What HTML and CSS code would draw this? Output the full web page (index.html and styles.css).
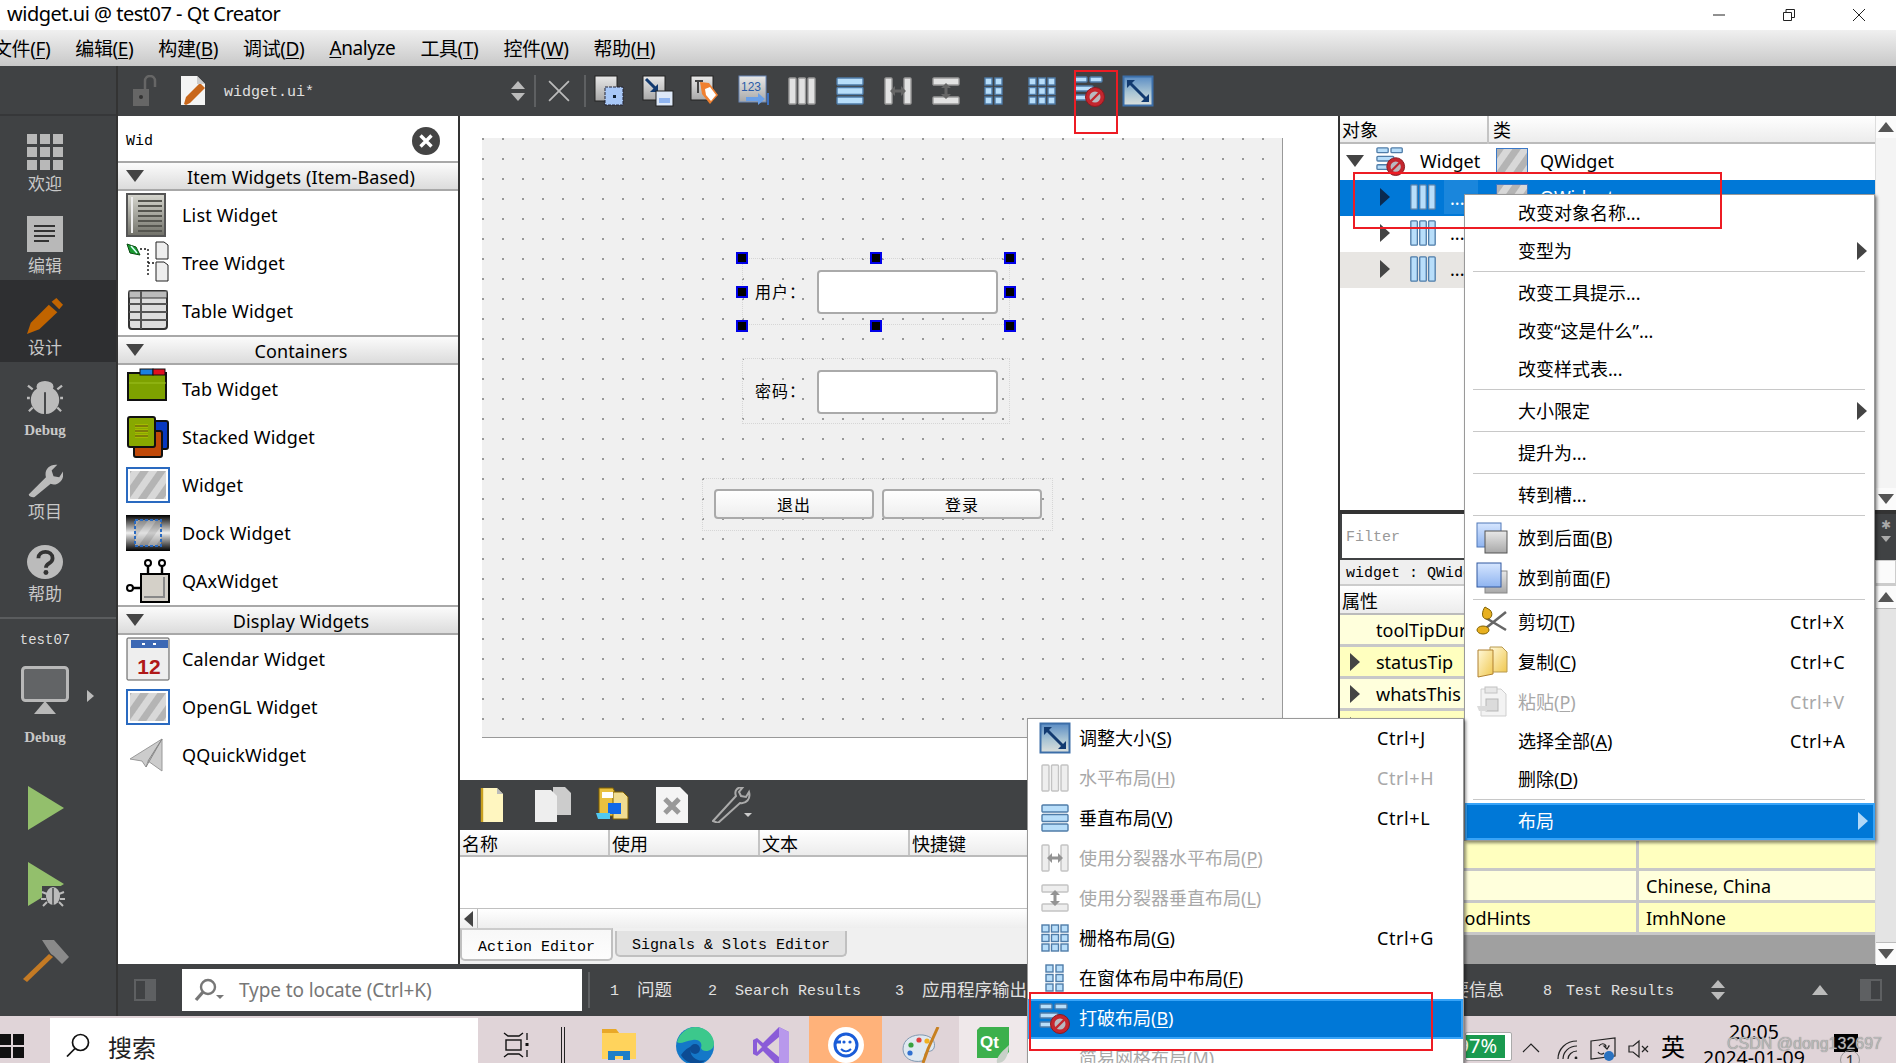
FILE: index.html
```html
<!DOCTYPE html>
<html lang="zh-CN">
<head>
<meta charset="utf-8">
<title>widget.ui @ test07 - Qt Creator</title>
<link rel="stylesheet" href="styles.css">
</head>
<body>
<svg class="sprite" aria-hidden="true">
  <defs>
    <pattern id="hatch" width="14" height="14" patternUnits="userSpaceOnUse" patternTransform="rotate(35)">
      <rect width="14" height="14" fill="#d8d8d8"/><rect width="7" height="14" fill="#b4b4b4"/>
    </pattern>
    <linearGradient id="g-gray" x1="0" y1="0" x2="0" y2="1"><stop offset="0" stop-color="#e8e8e8"/><stop offset="1" stop-color="#a8a8a8"/></linearGradient>
    <linearGradient id="g-blue" x1="0" y1="0" x2="0" y2="1"><stop offset="0" stop-color="#d6e6ff"/><stop offset="1" stop-color="#8fb4f0"/></linearGradient>
    <linearGradient id="g-yellow" x1="0" y1="0" x2="1" y2="1"><stop offset="0" stop-color="#fff8d8"/><stop offset="1" stop-color="#f0c850"/></linearGradient>
    <linearGradient id="g-dock" x1="0" y1="0" x2="0" y2="1"><stop offset="0" stop-color="#000"/><stop offset=".5" stop-color="#eee"/><stop offset="1" stop-color="#000"/></linearGradient>
    <linearGradient id="g-list" x1="0" y1="0" x2="0" y2="1"><stop offset="0" stop-color="#d8d8d0"/><stop offset="1" stop-color="#707068"/></linearGradient>
    <linearGradient id="g-adj" x1="0" y1="0" x2="0" y2="1"><stop offset="0" stop-color="#5a8cc4"/><stop offset=".55" stop-color="#a8c4d4"/><stop offset="1" stop-color="#dce0dc"/></linearGradient>
  </defs>

  <symbol id="s-hl" viewBox="0 0 32 32"><rect class="bar" x="3" y="3" width="7" height="26" rx="1"/><rect class="bar" x="12.5" y="3" width="7" height="26" rx="1"/><rect class="bar" x="22" y="3" width="7" height="26" rx="1"/></symbol>
  <symbol id="s-vl" viewBox="0 0 32 32"><rect class="bar" x="3" y="3" width="26" height="7" rx="1"/><rect class="bar" x="3" y="12.5" width="26" height="7" rx="1"/><rect class="bar" x="3" y="22" width="26" height="7" rx="1"/></symbol>
  <symbol id="s-sh" viewBox="0 0 32 32"><rect class="bar" x="3" y="3" width="7" height="26" rx="1"/><rect class="bar" x="22" y="3" width="7" height="26" rx="1"/><path d="M8 16l5-5v3.5h6V11l5 5-5 5v-3.5h-6V21z" fill="#666"/></symbol>
  <symbol id="s-sv" viewBox="0 0 32 32"><rect class="bar" x="3" y="3" width="26" height="7" rx="1"/><rect class="bar" x="3" y="22" width="26" height="7" rx="1"/><path d="M16 8l5 5h-3.5v6H21l-5 5-5-5h3.5v-6H11z" fill="#666"/></symbol>
  <symbol id="s-grid" viewBox="0 0 32 32"><g class="cell"><rect x="3" y="3" width="7" height="7"/><rect x="12.5" y="3" width="7" height="7"/><rect x="22" y="3" width="7" height="7"/><rect x="3" y="12.5" width="7" height="7"/><rect x="12.5" y="12.5" width="7" height="7"/><rect x="22" y="12.5" width="7" height="7"/><rect x="3" y="22" width="7" height="7"/><rect x="12.5" y="22" width="7" height="7"/><rect x="22" y="22" width="7" height="7"/></g></symbol>
  <symbol id="s-fgrid" viewBox="0 0 32 32"><g class="cell"><rect x="7" y="3" width="7" height="7"/><rect x="17" y="3" width="7" height="7"/><rect x="7" y="12.5" width="7" height="7"/><rect x="17" y="12.5" width="7" height="7"/><rect x="7" y="22" width="7" height="7"/><rect x="17" y="22" width="7" height="7"/></g></symbol>
  <symbol id="s-break" viewBox="0 0 32 32"><rect class="bar" x="1" y="2" width="12" height="5" rx="1"/><rect class="bar" x="16" y="2" width="12" height="5" rx="1"/><rect class="bar" x="1" y="11" width="18" height="5" rx="1"/><rect class="bar" x="1" y="20" width="12" height="5" rx="1"/><circle cx="21" cy="22" r="9.500" fill="#c4262e" stroke="#8a1a20"/><circle cx="21" cy="22" r="5.500" fill="#b9b9c0"/><path d="M16 27l10-10" stroke="#c4262e" stroke-width="2.400"/></symbol>
  <symbol id="s-adjust" viewBox="0 0 32 32"><rect x="1.500" y="1.500" width="29" height="29" fill="url(#g-adj)" stroke="#3c6ea8" stroke-width="2"/><path d="M7 7l18 18" stroke="#123a70" stroke-width="3"/><path d="M5 5h8l-8 8zM27 27h-8l8-8z" fill="#123a70"/></symbol>
  <symbol id="s-w1" viewBox="0 0 32 32"><rect x="1" y="1" width="22" height="25" fill="url(#g-gray)" stroke="#222"/><rect x="11" y="12" width="18" height="18" fill="#a8c8f8" stroke="#223" stroke-dasharray="3 1"/><rect x="19" y="20" width="3" height="3" fill="#123"/></symbol>
  <symbol id="s-w2" viewBox="0 0 32 32"><rect x="1" y="1" width="22" height="24" fill="url(#g-gray)" stroke="#222"/><path d="M4 4l11 11" stroke="#123a70" stroke-width="3"/><path d="M16 17v-8l-8 8z" fill="#123a70"/><rect x="14" y="16" width="17" height="15" fill="#dde8f8" stroke="#222"/><rect x="17" y="23" width="11" height="5" fill="#8fb4f0"/></symbol>
  <symbol id="s-w3" viewBox="0 0 32 32"><rect x="1" y="1" width="22" height="24" fill="url(#g-gray)" stroke="#222"/><path d="M5 6h8M8 6v12" stroke="#444" stroke-width="2"/><path d="M10 7l9 1 9 12-8 9-8-10z" fill="#f08030"/><path d="M15 14l5-2 6 8-5 6-5-6z" fill="#fff"/></symbol>
  <symbol id="s-w4" viewBox="0 0 32 32"><rect x="1" y="1" width="27" height="26" fill="url(#g-gray)" stroke="#6a88b8"/><text x="3" y="16" class="svg-123">123</text><path d="M8 24h15" stroke="#6aa0e8" stroke-width="4"/><path d="M20 18l7 6-7 6z" fill="#6aa0e8"/><path d="M30 18v12" stroke="#3c70c0" stroke-width="2"/></symbol>

  <symbol id="s-list" viewBox="0 0 44 44"><rect x="1" y="1" width="38" height="42" fill="url(#g-list)" stroke="#555" stroke-width="2"/><g stroke="#55554f" stroke-width="2"><path d="M12 8h24M12 13h24M12 18h24M12 23h24M12 28h24M12 33h24M12 38h24"/></g><path d="M6 4v36" stroke="#eee" stroke-width="2"/></symbol>
  <symbol id="s-tree" viewBox="0 0 44 44"><path d="M1 3l9 3 4 8-10-2z" fill="#1a9c30" stroke="#0a4a12"/><path d="M5 5l6 7" stroke="#dff" stroke-width="1.500"/><path d="M14 8h8M22 8v26M22 22h6" stroke="#111" stroke-width="1.400" stroke-dasharray="2 2"/><path d="M30 1h8l4 3v14H30z" fill="#eee" stroke="#222"/><path d="M30 21h8l4 3v16H30z" fill="#eee" stroke="#222"/></symbol>
  <symbol id="s-table" viewBox="0 0 44 44"><rect x="3" y="2" width="38" height="38" rx="3" fill="#ddd" stroke="#333" stroke-width="2"/><rect x="3" y="2" width="38" height="7" fill="#bbb" stroke="#333"/><g stroke="#555" stroke-width="2"><path d="M15 2v38M3 15h38M3 23h38M3 31h38"/></g></symbol>
  <symbol id="s-tab" viewBox="0 0 44 44"><path d="M2 6h38v27H2z" fill="#7ea200" stroke="#111" stroke-width="2"/><rect x="14" y="2" width="13" height="6" fill="#1a80e0" stroke="#111"/><rect x="27" y="2" width="12" height="6" fill="#e01020" stroke="#111"/><path d="M3 16h37" stroke="#9cc020"/></symbol>
  <symbol id="s-stacked" viewBox="0 0 44 44"><rect x="26" y="6" width="16" height="28" rx="2" fill="#0838c0" stroke="#111" stroke-width="2"/><rect x="8" y="16" width="28" height="26" rx="2" fill="#c04808" stroke="#111" stroke-width="2"/><rect x="2" y="2" width="27" height="30" rx="2" fill="#88a800" stroke="#111" stroke-width="2"/><path d="M9 11h13M9 16h13M9 21h13" stroke="#ee0" stroke-width="2.400"/><path d="M9 11h13M9 16h13M9 21h13" stroke="#111" stroke-width="1"/></symbol>
  <symbol id="s-widget" viewBox="0 0 44 36"><rect x="1" y="1" width="42" height="34" fill="url(#hatch)" stroke="#2a6ac0" stroke-width="2"/><rect x="3" y="3" width="38" height="30" fill="none" stroke="#fff" stroke-width="2"/></symbol>
  <symbol id="s-dock" viewBox="0 0 44 36"><rect width="44" height="36" fill="url(#g-dock)"/><rect x="9" y="5" width="26" height="26" fill="url(#hatch)" opacity=".6"/><rect x="9" y="5" width="26" height="26" fill="none" stroke="#2a6ac0" stroke-width="2" stroke-dasharray="3 2"/></symbol>
  <symbol id="s-qax" viewBox="0 0 44 44"><rect x="15" y="15" width="28" height="28" fill="#d4d0c8" stroke="#000" stroke-width="2"/><path d="M38 18v20H18" fill="none" stroke="#888" stroke-width="2"/><path d="M22 15V7M36 15V7M4 29h11" stroke="#000" stroke-width="2.400"/><circle cx="22" cy="4" r="3" fill="#fff" stroke="#000" stroke-width="2"/><circle cx="36" cy="4" r="3" fill="#fff" stroke="#000" stroke-width="2"/><circle cx="4" cy="29" r="3" fill="#fff" stroke="#000" stroke-width="2"/></symbol>
  <symbol id="s-cal" viewBox="0 0 44 44"><rect x="1" y="1" width="42" height="42" rx="1" fill="#eee" stroke="#555"/><rect x="5" y="3" width="37" height="8" fill="#3c68b4"/><rect x="16" y="6" width="3" height="2" fill="#fff"/><rect x="27" y="6" width="3" height="2" fill="#fff"/><text x="23" y="37" class="svg-cal">12</text></symbol>
  <symbol id="s-quick" viewBox="0 0 36 36"><path d="M0 22L32 2v32l-14-10-2 6-4-6z" fill="#ccc" stroke="#999"/><path d="M32 2L16 30M32 2l-14 22" stroke="#888" fill="none"/></symbol>

  <symbol id="s-lock" viewBox="0 0 26 32"><rect x="1" y="14" width="16" height="17" fill="#666"/><path d="M13 14V6a5 5 0 0 1 10 0v6" fill="none" stroke="#666" stroke-width="2.500"/><circle cx="9" cy="22" r="2" fill="#333"/></symbol>
  <symbol id="s-doc" viewBox="0 0 28 32"><path d="M1 1h16l8 8v21H1z" fill="#f4f4f4"/><path d="M6 30L4 29l2-7L20 8l5 5L10 28z" fill="#c8661a"/><path d="M17 1v8h8" fill="#ccc"/></symbol>

  <symbol id="s-home" viewBox="0 0 36 36"><g fill="#b8b8b8"><rect width="10" height="10"/><rect x="13" width="10" height="10"/><rect x="26" width="10" height="10"/><rect y="13" width="10" height="10"/><rect x="13" y="13" width="10" height="10"/><rect x="26" y="13" width="10" height="10"/><rect y="26" width="10" height="10"/><rect x="13" y="26" width="10" height="10"/><rect x="26" y="26" width="10" height="10"/></g></symbol>
  <symbol id="s-edit" viewBox="0 0 36 36"><rect width="36" height="36" fill="#b8b8b8"/><path d="M7 10h21M7 15h21M7 20h21M7 25h15" stroke="#333" stroke-width="2"/></symbol>
  <symbol id="s-pencil" viewBox="0 0 38 38"><path d="M0 38l4-12L23 7l9 8-19 18z" fill="#c16400"/><path d="M26 4l5-4 7 7-4 5z" fill="#c16400"/></symbol>
  <symbol id="s-bug" viewBox="0 0 38 36"><path d="M6 9L1 5M32 9l5-4M3 18H0M35 18h3M6 28l-4 4M32 28l4 4" stroke="#bbb" stroke-width="2.400"/><ellipse cx="19" cy="6" rx="9" ry="6" fill="#bbb"/><path d="M18 6C10 6 4 12 4 20s6 14 14 15z" fill="#bbb"/><path d="M20 6c8 0 14 6 14 14s-6 14-14 15z" fill="#bbb"/></symbol>
  <symbol id="s-wrench" viewBox="0 0 38 36"><path d="M2 33L20 15c-2-7 3-14 12-13l-6 6 2 6 6 1 4-6c2 9-6 16-13 13L8 36c-2 1-7-1-6-3z" fill="#bbb"/></symbol>
  <symbol id="s-help" viewBox="0 0 38 36"><ellipse cx="19" cy="18" rx="19" ry="18" fill="#bbb"/><path d="M12 14c0-9 15-9 15 0 0 6-7 5-7 10" fill="none" stroke="#333" stroke-width="4"/><circle cx="20" cy="29" r="2.600" fill="#333"/></symbol>
  <symbol id="s-monitor" viewBox="0 0 48 48"><rect x="1.500" y="1.500" width="45" height="33" rx="3" fill="#626466" stroke="#b8b8b8" stroke-width="3"/><path d="M24 35l-11 13h22z" fill="#b8b8b8"/></symbol>
  <symbol id="s-play" viewBox="0 0 36 44"><path d="M0 0l36 22L0 44z" fill="#93bf6c"/></symbol>
  <symbol id="s-playbug" viewBox="0 0 38 46"><path d="M0 0l36 22L0 44z" fill="#93bf6c"/><path d="M14 24h24v18l-12 4-12-4z" fill="#404244"/><ellipse cx="25" cy="34" rx="7" ry="9" fill="#bbb"/><path d="M25 26v17M14 30l5 2M36 30l-5 2M13 37h5M37 37h-5M15 44l4-4M35 44l-4-4" stroke="#bbb" stroke-width="2"/><path d="M25 26v17" stroke="#404244" stroke-width="1.400"/></symbol>
  <symbol id="s-hammer" viewBox="0 0 46 42"><path d="M0 39L26 14l4 3L4 42z" fill="#c47a24"/><path d="M19 0h12l15 17-7 7-8-8-3-2z" fill="#8a8a8a"/></symbol>
  <symbol id="s-panel" viewBox="0 0 22 22"><rect width="22" height="22" fill="#5e6062"/><rect x="2" y="2" width="9" height="18" fill="#404244"/></symbol>

  <symbol id="s-newdoc" viewBox="0 0 24 36"><path d="M2 1h15l6 6v28H2z" fill="#fff6c0"/><path d="M2 1v34" stroke="#c8a020" stroke-width="2.400"/><path d="M17 1v6h6" fill="#bbb"/></symbol>
  <symbol id="s-copydoc" viewBox="0 0 38 36"><path d="M20 0h12l6 6v22H20z" fill="#ccc"/><path d="M2 3h16l6 6v26H2z" fill="#eee"/></symbol>
  <symbol id="s-group" viewBox="0 0 34 36"><path d="M4 1h14l2 4v24H4z" fill="#e8c040" stroke="#806000"/><path d="M18 5h10l5 5v22H18z" fill="#f0dc90" stroke="#806000"/><rect x="7" y="5" width="11" height="6" fill="#fff"/><rect x="13" y="16" width="13" height="11" fill="#1068e8"/><path d="M1 26l14 0 0 6H3z" fill="#50c8f0"/></symbol>
  <symbol id="s-del" viewBox="0 0 32 36"><path d="M0 0h24l8 8v28H0z" fill="#f4f4f4"/><path d="M9 12l14 14M23 12L9 26" stroke="#999" stroke-width="5"/></symbol>
  <symbol id="s-spanner" viewBox="0 0 40 36"><path d="M1 34L24 9c-2-5 1-9 7-9l-4 5 2 4 5 1 3-5c2 7-3 12-9 11L6 36z" fill="none" stroke="#aaa" stroke-width="2"/><path d="M32 26h8l-4 4z" fill="#ccc"/></symbol>

  <symbol id="s-back" viewBox="0 0 32 32"><rect x="1" y="1" width="24" height="24" fill="url(#g-blue)" stroke="#5078b8"/><rect x="9" y="9" width="22" height="22" fill="url(#g-gray)" stroke="#555"/></symbol>
  <symbol id="s-front" viewBox="0 0 32 32"><rect x="9" y="9" width="22" height="22" fill="url(#g-gray)" stroke="#888"/><rect x="1" y="1" width="24" height="24" fill="url(#g-blue)" stroke="#3058a0"/></symbol>
  <symbol id="s-cut" viewBox="0 0 32 32"><path d="M10 12L30 24M10 22L30 6" stroke="#666" stroke-width="2.600"/><path d="M14 4c4 4 1 10-4 9S6 5 9 1z" fill="#e8b020" stroke="#806000"/><ellipse cx="7" cy="24" rx="6" ry="4" fill="#e8b020" stroke="#806000"/></symbol>
  <symbol id="s-copy" viewBox="0 0 32 32"><path d="M14 1h12l5 5v20H14z" fill="url(#g-yellow)" stroke="#b89a50"/><path d="M2 4h15v24L2 31z" fill="url(#g-yellow)" stroke="#b08030"/></symbol>
  <symbol id="s-paste" viewBox="0 0 32 32"><path d="M5 3h20l5 5v22H5z" fill="#eee" stroke="#bbb"/><rect x="9" y="1" width="12" height="6" fill="#ddd" stroke="#aaa"/><rect x="10" y="13" width="12" height="12" fill="#ccc" stroke="#999"/><path d="M1 20h10v5H3z" fill="#ccc"/></symbol>
  <symbol id="s-hatch" viewBox="0 0 32 26"><rect x=".5" y=".5" width="31" height="25" fill="url(#hatch)" stroke="#3a78c8"/></symbol>

  <symbol id="s-win" viewBox="0 0 24 24"><path d="M0 0h11v11H0zM13 0h11v11H13zM0 13h11v11H0zM13 13h11v11H13z" fill="#111"/></symbol>
  <symbol id="s-search" viewBox="0 0 24 24"><circle cx="14.500" cy="9.500" r="8" fill="none" stroke="#111" stroke-width="1.700"/><path d="M9 15.500L1 23.500" stroke="#111" stroke-width="1.700"/></symbol>
  <symbol id="s-locate" viewBox="0 0 30 24"><circle cx="14" cy="9" r="7" fill="none" stroke="#777" stroke-width="2.400"/><path d="M9 14L2 22" stroke="#777" stroke-width="3.400"/><path d="M22 17h8l-4 4z" fill="#777"/></symbol>
  <symbol id="s-taskview" viewBox="0 0 26 26"><path d="M1 1l4 3h11l4-3M1 25l4-3h11l4 3" fill="none" stroke="#111" stroke-width="1.400"/><rect x="3" y="8" width="15" height="10" fill="none" stroke="#111" stroke-width="1.400"/><path d="M24 1v7M24 18v7" stroke="#111" stroke-width="1.300"/><rect x="22.500" y="11" width="3" height="3" fill="#111"/></symbol>
  <symbol id="s-folder" viewBox="0 0 34 34"><path d="M0 2h14l3 4h17v26H0z" fill="#ffd35c"/><path d="M0 2h14l3 4H0z" fill="#e8a828"/><path d="M6 24h22v9h-7v-4h-8v4H6z" fill="#1c7ec8"/></symbol>
  <symbol id="s-edge" viewBox="0 0 38 38"><circle cx="19" cy="19" r="19" fill="#1478c8"/><path d="M1 15C4 4 14 0 19 0c10 0 19 7 19 17 0 8-12 9-13 4 2-6-3-9-8-8C9 14 4 18 1 15z" fill="#3cc88c"/><path d="M16 19c-5 7 3 17 14 14-8 7-20 4-25-5 3-5 8-8 11-9z" fill="#0c4c94"/><circle cx="19" cy="22" r="5" fill="#0c4c94"/></symbol>
  <symbol id="s-vs" viewBox="0 0 36 40"><path d="M26 0l10 5v30l-10 5L10 24l-6 5-4-2V13l4-2 6 5z" fill="#8a5cd8"/><path d="M26 10v20l-12-10z" fill="#e0d4d8"/><path d="M26 0l10 5v30l-10 5z" fill="#b898ec"/><path d="M4 15v10l5-5z" fill="#e0d4d8"/></symbol>
  <symbol id="s-chat" viewBox="0 0 36 36"><circle cx="18" cy="18" r="18" fill="#fff"/><circle cx="18" cy="18" r="11" fill="none" stroke="#1a5cd8" stroke-width="3"/><path d="M7 15h6" stroke="#1a5cd8" stroke-width="3"/><circle cx="16" cy="15" r="1.600" fill="#1a5cd8"/><circle cx="22" cy="15" r="1.600" fill="#1a5cd8"/><path d="M13 22c3 3 7 3 10 0" stroke="#1a5cd8" stroke-width="2" fill="none"/></symbol>
  <symbol id="s-palette" viewBox="0 0 38 40"><path d="M1 22c0-10 10-15 20-14 9 1 13 7 11 13-2 5-8 2-9 6-1 3 2 6-3 7C10 36 1 31 1 22z" fill="#dfe8f0" stroke="#8098b0"/><circle cx="9" cy="18" r="2.600" fill="#38a040"/><circle cx="17" cy="13" r="2.600" fill="#e04040"/><circle cx="25" cy="14" r="2.600" fill="#f0b020"/><circle cx="8" cy="26" r="2.600" fill="#3070d0"/><path d="M36 0L26 22l-5 14" stroke="#c88020" stroke-width="3" fill="none"/></symbol>
  <symbol id="s-qt" viewBox="0 0 32 36"><path d="M3 0h29v25l-6 6H0V3z" fill="#3cb04c"/><text x="3" y="21" class="svg-qt">Qt</text><path d="M32 18c-4 4-14 12-12 18 8 0 11-6 12-18z" fill="#c8d0c8"/></symbol>
  <symbol id="s-wifi" viewBox="0 0 22 20"><path d="M1 20C1 10 9 2 20 2M6 20c0-7 6-13 14-13M11 20c0-4 4-8 9-8" fill="none" stroke="#222" stroke-width="1.200"/><circle cx="19" cy="19" r="1.400" fill="#222"/></symbol>
  <symbol id="s-sync" viewBox="0 0 26 24"><path d="M1 4l24-3v18L1 22z" fill="none" stroke="#222" stroke-width="1.200"/><path d="M9 9c2-3 6-3 7 0l-2 0 3 3 2-3-1 0M14 16c-2 2-5 1-6-1" fill="none" stroke="#222" stroke-width="1.200"/><circle cx="19" cy="19" r="5" fill="#2a72c0"/></symbol>
  <symbol id="s-speaker" viewBox="0 0 22 20"><path d="M1 7h4l6-5v16l-6-5H1z" fill="none" stroke="#222" stroke-width="1.200"/><path d="M14 7l6 6M20 7l-6 6" stroke="#222" stroke-width="1.200"/></symbol>
  <symbol id="s-notify" viewBox="0 0 24 18"><rect width="24" height="18" fill="#000"/></symbol>
</svg>

<div class="window">
  <header class="titlebar">
    <span class="title">widget.ui @ test07 - Qt Creator</span>
    <div class="winctl">
      <svg class="wc" viewBox="0 0 14 14"><path d="M1 7h12" stroke="#222"/></svg>
      <svg class="wc" viewBox="0 0 14 14"><path d="M1.500 4.500h8v8h-8zM4 4.500V1.500h8.500v8h-3" fill="none" stroke="#222"/></svg>
      <svg class="wc" viewBox="0 0 14 14"><path d="M1 1l12 12M13 1L1 13" stroke="#222"/></svg>
    </div>
  </header>

  <nav class="menubar">
    <span class="mb first">文件(<u>F</u>)</span><span class="mb">编辑(<u>E</u>)</span><span class="mb">构建(<u>B</u>)</span><span class="mb">调试(<u>D</u>)</span><span class="mb"><u>A</u>nalyze</span><span class="mb">工具(<u>T</u>)</span><span class="mb">控件(<u>W</u>)</span><span class="mb">帮助(<u>H</u>)</span>
  </nav>

  <main class="body">
    <aside class="sidebar">
      <div class="side-top"></div>
      <div class="mode"><svg class="mode-ico"><use href="#s-home"/></svg><span class="mode-label">欢迎</span></div>
      <div class="mode"><svg class="mode-ico"><use href="#s-edit"/></svg><span class="mode-label">编辑</span></div>
      <div class="mode active"><svg class="mode-ico"><use href="#s-pencil"/></svg><span class="mode-label">设计</span></div>
      <div class="mode"><svg class="mode-ico"><use href="#s-bug"/></svg><span class="mode-label mono">Debug</span></div>
      <div class="mode"><svg class="mode-ico"><use href="#s-wrench"/></svg><span class="mode-label">项目</span></div>
      <div class="mode"><svg class="mode-ico"><use href="#s-help"/></svg><span class="mode-label">帮助</span></div>
      <div class="kit">
        <span class="kit-name">test07</span>
        <div class="kit-mon"><svg class="mon-ico"><use href="#s-monitor"/></svg><span class="tri-r small kit-arrow"></span></div>
        <span class="kit-name kit-build">Debug</span>
      </div>
      <svg class="run-play"><use href="#s-play"/></svg>
      <svg class="run-debug"><use href="#s-playbug"/></svg>
      <svg class="run-build"><use href="#s-hammer"/></svg>
    </aside>

    <div class="content">
      <div class="edbar">
        <svg class="ed-lock"><use href="#s-lock"/></svg>
        <svg class="ed-doc"><use href="#s-doc"/></svg>
        <span class="ed-name">widget.ui*</span>
        <span class="updown"><i></i><i></i></span>
        <span class="tb-sep"></span>
        <svg class="ed-x" viewBox="0 0 20 20"><path d="M1 1l18 18M19 1L1 19" stroke="#bbb" stroke-width="1.600"/></svg>
        <span class="tb-sep"></span>
        <div class="tools gray">
          <svg class="tool"><use href="#s-w1"/></svg>
          <svg class="tool"><use href="#s-w2"/></svg>
          <svg class="tool"><use href="#s-w3"/></svg>
          <svg class="tool"><use href="#s-w4"/></svg>
          <svg class="tool"><use href="#s-hl"/></svg>
          <svg class="tool blue"><use href="#s-vl"/></svg>
          <svg class="tool"><use href="#s-sh"/></svg>
          <svg class="tool"><use href="#s-sv"/></svg>
          <svg class="tool blue"><use href="#s-fgrid"/></svg>
          <svg class="tool blue"><use href="#s-grid"/></svg>
          <svg class="tool blue"><use href="#s-break"/></svg>
          <svg class="tool"><use href="#s-adjust"/></svg>
        </div>
      </div>

      <div class="work">
        <section class="palette">
          <div class="pal-search"><span class="pal-query">Wid</span>
            <svg class="pal-clear" viewBox="0 0 28 28"><circle cx="14" cy="14" r="14" fill="#444"/><path d="M8.500 8.500l11 11M19.500 8.500l-11 11" stroke="#fff" stroke-width="3.400"/></svg>
          </div>
          <div class="pal-head"><span class="tri-d"></span><span class="pal-title">Item Widgets (Item-Based)</span></div>
          <div class="pal-row"><svg class="pal-ico"><use href="#s-list"/></svg>List Widget</div>
          <div class="pal-row"><svg class="pal-ico"><use href="#s-tree"/></svg>Tree Widget</div>
          <div class="pal-row"><svg class="pal-ico"><use href="#s-table"/></svg>Table Widget</div>
          <div class="pal-head"><span class="tri-d"></span><span class="pal-title">Containers</span></div>
          <div class="pal-row"><svg class="pal-ico"><use href="#s-tab"/></svg>Tab Widget</div>
          <div class="pal-row"><svg class="pal-ico"><use href="#s-stacked"/></svg>Stacked Widget</div>
          <div class="pal-row"><svg class="pal-ico short"><use href="#s-widget"/></svg>Widget</div>
          <div class="pal-row"><svg class="pal-ico short"><use href="#s-dock"/></svg>Dock Widget</div>
          <div class="pal-row"><svg class="pal-ico"><use href="#s-qax"/></svg>QAxWidget</div>
          <div class="pal-head"><span class="tri-d"></span><span class="pal-title">Display Widgets</span></div>
          <div class="pal-row"><svg class="pal-ico"><use href="#s-cal"/></svg>Calendar Widget</div>
          <div class="pal-row"><svg class="pal-ico short"><use href="#s-widget"/></svg>OpenGL Widget</div>
          <div class="pal-row"><span class="pal-ico-box"><svg class="pal-quick"><use href="#s-quick"/></svg></span>QQuickWidget</div>
        </section>

        <section class="center">
          <div class="canvas">
            <div class="form">
              <div class="lay lay1"></div><div class="lay lay2"></div><div class="lay lay3"></div>
              <span class="form-label lab1">用户：</span>
              <span class="form-input in1"></span>
              <span class="form-label lab2">密码：</span>
              <span class="form-input in2"></span>
              <span class="form-btn b1">退出</span>
              <span class="form-btn b2">登录</span>
              <i class="hd h1"></i><i class="hd h2"></i><i class="hd h3"></i><i class="hd h4"></i><i class="hd h5"></i><i class="hd h6"></i><i class="hd h7"></i><i class="hd h8"></i>
            </div>
          </div>
          <div class="actions">
            <div class="act-bar">
              <span class="act"><svg class="act-a"><use href="#s-newdoc"/></svg></span>
              <span class="act"><svg class="act-b"><use href="#s-copydoc"/></svg></span>
              <span class="act"><svg class="act-c"><use href="#s-group"/></svg></span>
              <span class="act"><svg class="act-d"><use href="#s-del"/></svg></span>
              <span class="act"><svg class="act-e"><use href="#s-spanner"/></svg></span>
            </div>
            <div class="act-head"><span class="col">名称</span><span class="col">使用</span><span class="col">文本</span><span class="col">快捷键</span></div>
            <div class="act-body"></div>
            <div class="hscroll"><span class="sb-l"><span class="tri-l"></span></span></div>
            <div class="tabs"><span class="tab on">Action Editor</span><span class="tab">Signals &amp; Slots Editor</span></div>
          </div>
        </section>

        <section class="right">
          <div class="tree-zone">
            <div class="tree">
              <div class="tree-head"><span class="th1">对象</span><span class="th2">类</span></div>
              <div class="trow">
                <div class="c1"><span class="tri-d t0"></span><svg class="ti-break blue"><use href="#s-break"/></svg><span>Widget</span></div>
                <div class="c2"><svg class="ti-w"><use href="#s-hatch"/></svg>QWidget</div>
              </div>
              <div class="trow sel">
                <div class="c1 kid"><span class="tri-r dark"></span><svg class="ti-hl blue"><use href="#s-hl"/></svg><span class="dots">...</span></div>
                <div class="c2"><svg class="ti-w"><use href="#s-hatch"/></svg>QWidget</div>
              </div>
              <div class="trow">
                <div class="c1 kid"><span class="tri-r"></span><svg class="ti-hl blue"><use href="#s-hl"/></svg><span class="dots">...</span></div>
                <div class="c2"><svg class="ti-w"><use href="#s-hatch"/></svg>QWidget</div>
              </div>
              <div class="trow alt">
                <div class="c1 kid"><span class="tri-r"></span><svg class="ti-hl blue"><use href="#s-hl"/></svg><span class="dots">...</span></div>
                <div class="c2"><svg class="ti-w"><use href="#s-hatch"/></svg>QWidget</div>
              </div>
            </div>
            <div class="vscroll"><span class="sb-u"><span class="tri-u"></span></span><span class="sb-fill"></span><span class="sb-d"><span class="tri-dn"></span></span></div>
          </div>
          <div class="prop-zone">
            <div class="filter-row"><span class="filter">Filter</span><span class="filter-tool"><span class="gear">✱</span><span class="tri-dn small"></span></span></div>
            <div class="class-row"><span class="class-name">widget : QWidget</span><span class="class-end"></span></div>
            <div class="prop-main">
              <div class="props">
                <div class="prop-head"><span>属性</span><span>值</span></div>
                <div class="prow"><div class="p1">toolTipDuration</div><div class="p2">-1</div></div>
                <div class="prow"><div class="p1 ex"><span class="tri-r"></span>statusTip</div><div class="p2"></div></div>
                <div class="prow"><div class="p1 ex"><span class="tri-r"></span>whatsThis</div><div class="p2"></div></div>
                <div class="prow"><div class="p1 ex"><span class="tri-r"></span>accessibleName</div><div class="p2"></div></div>
                <div class="prow"><div class="p1 ex"><span class="tri-r"></span>accessibleDescription</div><div class="p2"></div></div>
                <div class="prow"><div class="p1">layoutDirection</div><div class="p2">LeftToRight</div></div>
                <div class="prow"><div class="p1">autoFillBackground</div><div class="p2"></div></div>
                <div class="prow"><div class="p1">styleSheet</div><div class="p2"></div></div>
                <div class="prow"><div class="p1">locale</div><div class="p2">Chinese, China</div></div>
                <div class="prow"><div class="p1">inputMethodHints</div><div class="p2">ImhNone</div></div>
                <div class="prop-rest"></div>
              </div>
              <div class="vscroll v2"><span class="sb-u"><span class="tri-u"></span></span><span class="sb-thumb"></span><span class="sb-d"><span class="tri-dn"></span></span></div>
            </div>
          </div>
        </section>
      </div>

      <div class="panebar">
        <svg class="pane-toggle"><use href="#s-panel"/></svg>
        <div class="locator"><svg class="loc-ico"><use href="#s-locate"/></svg><span>Type to locate (Ctrl+K)</span></div>
        <span class="pane-sep"></span>
        <span class="pane p-first"><b>1</b><span class="cjk">问题</span></span>
        <span class="pane"><b>2</b>Search Results</span>
        <span class="pane"><b>3</b><span class="cjk">应用程序输出</span></span>
        <div class="pane-right">
          <span class="pane p-sum"><b>6</b><span class="cjk">概要信息</span></span>
          <span class="pane p-test"><b>8</b>Test Results</span>
          <span class="updown"><i></i><i></i></span>
          <span class="tri-u pale"></span>
          <svg class="pane-toggle last"><use href="#s-panel"/></svg>
        </div>
      </div>
    </div>
  </main>

  <footer class="taskbar">
    <div class="tb-start"><svg class="win-logo"><use href="#s-win"/></svg></div>
    <div class="tb-search"><svg class="s-ico"><use href="#s-search"/></svg><span>搜索</span></div>
    <div class="tb-view"><svg class="view-ico"><use href="#s-taskview"/></svg></div>
    <div class="tb-div"></div>
    <div class="tb-app"><svg class="app-a"><use href="#s-folder"/></svg></div>
    <div class="tb-app"><svg class="app-b"><use href="#s-edge"/></svg></div>
    <div class="tb-app"><svg class="app-c"><use href="#s-vs"/></svg></div>
    <div class="tb-app hot"><svg class="app-d"><use href="#s-chat"/></svg></div>
    <div class="tb-app wide"><svg class="app-e"><use href="#s-palette"/></svg></div>
    <div class="tb-app qt"><svg class="app-f"><use href="#s-qt"/></svg></div>
    <div class="tray">
      <div class="battery"><span class="bat-fill">97%</span></div>
      <svg class="tr-caret" viewBox="0 0 18 10"><path d="M1 9l8-8 8 8" fill="none" stroke="#222" stroke-width="1.200"/></svg>
      <svg class="tr-wifi"><use href="#s-wifi"/></svg>
      <svg class="tr-sync"><use href="#s-sync"/></svg>
      <svg class="tr-speak"><use href="#s-speaker"/></svg>
      <span class="tr-ime">英</span>
      <div class="clock"><span>20:05</span><span>2024-01-09</span></div>
      <div class="notify"><svg class="tr-notify"><use href="#s-notify"/></svg><span class="notify-num">1</span></div>
    </div>
  </footer>

  <div class="menu ctx">
    <div class="mi"><span class="mi-ico"></span><span>改变对象名称...</span></div>
    <div class="mi"><span class="mi-ico"></span><span>变型为</span><span class="tri-r mi-arrow"></span></div>
    <div class="msep"></div>
    <div class="mi"><span class="mi-ico"></span><span>改变工具提示...</span></div>
    <div class="mi"><span class="mi-ico"></span><span>改变“这是什么”...</span></div>
    <div class="mi"><span class="mi-ico"></span><span>改变样式表...</span></div>
    <div class="msep"></div>
    <div class="mi"><span class="mi-ico"></span><span>大小限定</span><span class="tri-r mi-arrow"></span></div>
    <div class="msep"></div>
    <div class="mi"><span class="mi-ico"></span><span>提升为...</span></div>
    <div class="msep"></div>
    <div class="mi"><span class="mi-ico"></span><span>转到槽...</span></div>
    <div class="msep"></div>
    <div class="mi tall"><span class="mi-ico"><svg class="mi-svg"><use href="#s-back"/></svg></span><span>放到后面(<u>B</u>)</span></div>
    <div class="mi tall"><span class="mi-ico"><svg class="mi-svg"><use href="#s-front"/></svg></span><span>放到前面(<u>F</u>)</span></div>
    <div class="msep"></div>
    <div class="mi tall"><span class="mi-ico"><svg class="mi-svg"><use href="#s-cut"/></svg></span><span>剪切(<u>T</u>)</span><span class="mi-key">Ctrl+X</span></div>
    <div class="mi tall"><span class="mi-ico"><svg class="mi-svg"><use href="#s-copy"/></svg></span><span>复制(<u>C</u>)</span><span class="mi-key">Ctrl+C</span></div>
    <div class="mi tall off"><span class="mi-ico"><svg class="mi-svg"><use href="#s-paste"/></svg></span><span>粘贴(<u>P</u>)</span><span class="mi-key">Ctrl+V</span></div>
    <div class="mi"><span class="mi-ico"></span><span>选择全部(<u>A</u>)</span><span class="mi-key">Ctrl+A</span></div>
    <div class="mi"><span class="mi-ico"></span><span>删除(<u>D</u>)</span></div>
    <div class="msep"></div>
    <div class="mi hot"><span class="mi-ico"></span><span>布局</span><span class="tri-r pale mi-arrow"></span></div>
  </div>

  <div class="menu sub">
    <div class="mi tall"><span class="mi-ico"><svg class="mi-svg"><use href="#s-adjust"/></svg></span><span>调整大小(<u>S</u>)</span><span class="mi-key">Ctrl+J</span></div>
    <div class="mi tall off gray"><span class="mi-ico"><svg class="mi-svg"><use href="#s-hl"/></svg></span><span>水平布局(<u>H</u>)</span><span class="mi-key">Ctrl+H</span></div>
    <div class="mi tall blue"><span class="mi-ico"><svg class="mi-svg"><use href="#s-vl"/></svg></span><span>垂直布局(<u>V</u>)</span><span class="mi-key">Ctrl+L</span></div>
    <div class="mi tall off gray"><span class="mi-ico"><svg class="mi-svg"><use href="#s-sh"/></svg></span><span>使用分裂器水平布局(<u>P</u>)</span></div>
    <div class="mi tall off gray"><span class="mi-ico"><svg class="mi-svg"><use href="#s-sv"/></svg></span><span>使用分裂器垂直布局(<u>L</u>)</span></div>
    <div class="mi tall blue"><span class="mi-ico"><svg class="mi-svg"><use href="#s-grid"/></svg></span><span>栅格布局(<u>G</u>)</span><span class="mi-key">Ctrl+G</span></div>
    <div class="mi tall blue"><span class="mi-ico"><svg class="mi-svg"><use href="#s-fgrid"/></svg></span><span>在窗体布局中布局(<u>F</u>)</span></div>
    <div class="mi tall hot blue"><span class="mi-ico"><svg class="mi-svg"><use href="#s-break"/></svg></span><span>打破布局(<u>B</u>)</span></div>
    <div class="mi tall off"><span class="mi-ico"></span><span>简易网格布局(<u>M</u>)</span></div>
  </div>

  <div class="mark mark-tool"></div>
  <div class="mark mark-rename"></div>
  <div class="mark mark-break"></div>
  <div class="watermark">CSDN @dong132697</div>
</div>
</body>
</html>
```

FILE: styles.css
```css
* { box-sizing: border-box; }
html, body { margin: 0; padding: 0; }
body {
  width: 1896px; height: 1063px; overflow: hidden;
  font-family: "Noto Sans", "Noto Sans CJK SC", sans-serif;
  font-size: 18px; color: #000; background: #fff;
}
u { text-underline-offset: 2px; }
.sprite { position: absolute; width: 0; height: 0; overflow: hidden; }
.window { position: relative; width: 1896px; height: 1063px; overflow: hidden; display: flex; flex-direction: column; }

/* icon paint */
.bar { fill: var(--bar, #e4e4e4); stroke: var(--edge, #8a8a8a); stroke-width: 1.4; }
.cell rect { fill: var(--bar, #e4e4e4); stroke: var(--edge, #8a8a8a); stroke-width: 1.4; }
.gray { --bar: #e2e2e2; --edge: #9a9a9a; }
.blue { --bar: #b8defa; --edge: #4f7ca8; }
.off.gray { --bar: #e8e8e8; --edge: #aaa; }
.svg-123 { font: 12px "Liberation Sans", sans-serif; fill: #2a5ca8; }
.svg-cal { font: bold 21px "Liberation Sans", sans-serif; fill: #b01818; text-anchor: middle; }
.svg-qt { font: bold 17px "Liberation Sans", sans-serif; fill: #fff; }

/* triangles */
.tri-r { display: inline-block; width: 0; height: 0; border-left: 10px solid #444; border-top: 9px solid transparent; border-bottom: 9px solid transparent; }
.tri-r.dark { border-left-color: #0a2a50; }
.tri-r.small { border-left-width: 7px; border-top-width: 6px; border-bottom-width: 6px; border-left-color: #bbb; }
.tri-r.pale { border-left-color: #b0d8f8; }
.tri-d { display: inline-block; width: 0; height: 0; border-top: 12px solid #444; border-left: 9px solid transparent; border-right: 9px solid transparent; }
.tri-u { display: inline-block; width: 0; height: 0; border-bottom: 10px solid #555; border-left: 8px solid transparent; border-right: 8px solid transparent; }
.tri-u.pale { border-bottom-color: #bbb; }
.tri-dn { display: inline-block; width: 0; height: 0; border-top: 10px solid #555; border-left: 8px solid transparent; border-right: 8px solid transparent; }
.tri-dn.small { border-top: 6px solid #aaa; border-left-width: 5px; border-right-width: 5px; }
.tri-l { display: inline-block; width: 0; height: 0; border-right: 9px solid #444; border-top: 8px solid transparent; border-bottom: 8px solid transparent; }

/* title + menu */
.titlebar { height: 30px; flex: none; display: flex; align-items: center; justify-content: space-between; background: #fff; padding: 0 0 4px 7px; }
.title { font-size: 20px; font-family: "Noto Sans", sans-serif; letter-spacing: -.5px; }
.winctl { display: flex; padding-top: 4px; }
.wc { width: 14px; height: 14px; margin: 0 30px 0 26px; }
.winctl .wc:last-child { margin-right: 30px; }
.menubar { height: 36px; flex: none; display: flex; align-items: center; gap: 25px; background: linear-gradient(#f0f0f0, #c8c8c8); font-size: 19px; }
.mb { white-space: nowrap; letter-spacing: -.4px; }
.mb.first { margin-left: -7px; }

/* body */
.body { flex: 1; min-height: 0; display: flex; background: #404244; }
.sidebar { width: 118px; flex: none; display: flex; flex-direction: column; border-right: 2px solid #333; background: #404244; color: #c8c8c8; }
.side-top { height: 50px; flex: none; border-bottom: 2px solid #363739; }
.mode { height: 82px; flex: none; display: flex; flex-direction: column; align-items: center; padding: 18px 26px 0 0; }
.mode.active { background: #2e2f31; }
.mode-ico { width: 36px; height: 36px; }
.mode-label { font-size: 17px; line-height: 24px; margin-top: 2px; }
.mode-label.mono { font-family: "Liberation Serif", serif; font-weight: bold; font-size: 15px; }
.kit { margin-top: 9px; border-top: 2px solid #5a5c5e; display: flex; flex-direction: column; align-items: center; padding: 12px 26px 0 0; }
.kit-name { font-family: "Liberation Mono", monospace; font-size: 14px; line-height: 18px; color: #ddd; }
.kit-build { font-family: "Liberation Serif", serif; font-weight: bold; margin-top: 14px; font-size: 15px; color: #c8c8c8; }
.kit-mon { position: relative; margin-top: 17px; width: 90px; display: flex; justify-content: center; height: 48px; }
.mon-ico { width: 48px; height: 48px; }
.kit-arrow { position: absolute; left: 87px; top: 24px; }
.run-play { width: 36px; height: 44px; margin: 40px 0 0 28px; flex: none; }
.run-debug { width: 38px; height: 46px; margin: 32px 0 0 28px; flex: none; }
.run-build { width: 46px; height: 42px; margin: 32px 0 0 23px; flex: none; }

.content { flex: 1; min-width: 0; display: flex; flex-direction: column; }
.edbar { height: 50px; flex: none; display: flex; align-items: center; color: #ddd; }
.ed-lock { width: 26px; height: 32px; margin-left: 14px; }
.ed-doc { width: 28px; height: 36px; margin-left: 22px; }
.ed-name { font-family: "Liberation Mono", monospace; font-size: 15px; color: #e0e0e0; margin-left: 16px; width: 285px; padding-top: 3px; }
.updown { display: inline-flex; flex-direction: column; gap: 4px; align-items: center; width: 18px; }
.updown i { display: block; width: 0; height: 0; border-left: 7px solid transparent; border-right: 7px solid transparent; }
.updown i:first-child { border-bottom: 8px solid #bbb; }
.updown i:last-child { border-top: 8px solid #bbb; }
.tb-sep { width: 2px; height: 32px; background: #5e6062; flex: none; }
.edbar .updown + .tb-sep { margin-left: 7px; }
.ed-x { width: 22px; height: 22px; margin: 0 14px 0 12px; }
.tools { display: flex; }
.tool { width: 32px; height: 34px; margin: 0 8px; }

.work { flex: 1; min-height: 0; display: flex; }
.palette { width: 340px; flex: none; background: #fff; display: flex; flex-direction: column; }
.pal-search { height: 45px; flex: none; margin: 2px 2px 0 2px; background: #fff; display: flex; align-items: center; justify-content: space-between; padding: 0 16px 0 6px; }
.pal-query { font-family: "Liberation Mono", monospace; font-size: 15px; padding-top: 2px; }
.pal-clear { width: 28px; height: 28px; }
.pal-head { height: 30px; flex: none; display: flex; align-items: center; padding-left: 8px; background: linear-gradient(#fbfbfb, #dcdcdc); border-top: 2px solid #a8a8a8; border-bottom: 2px solid #a8a8a8; }
.pal-search + .pal-head { margin-top: -2px; }
.pal-head .tri-d { flex: none; }
.pal-title { flex: 1; text-align: center; line-height: 24px; padding-top: 1px; letter-spacing: .1px; }
.pal-row { height: 48px; flex: none; display: flex; align-items: center; gap: 12px; padding-left: 8px; line-height: 24px; letter-spacing: .15px; }
.pal-ico { width: 44px; height: 44px; flex: none; }
.pal-ico.short { height: 36px; }
.pal-ico-box { width: 44px; height: 36px; flex: none; display: flex; justify-content: center; }
.pal-quick { width: 36px; height: 36px; }

.center { width: 880px; flex: none; border-left: 2px solid #333; background: #fff; display: flex; flex-direction: column; }
.canvas { height: 664px; flex: none; padding: 22px 0 0 22px; background: #fff; }
.form {
  position: relative; width: 801px; height: 600px;
  background-color: #f0f0f0;
  background-image: radial-gradient(circle at 1px 1px, #999 1px, transparent 1.2px);
  background-size: 20px 20px;
  border-right: 1px solid #999; border-bottom: 1px solid #999;
}
.lay { position: absolute; border: 1px dotted #d6d6d6; }
.lay1 { left: 260px; top: 120px; width: 268px; height: 67px; }
.lay2 { left: 260px; top: 220px; width: 268px; height: 66px; }
.lay3 { left: 220px; top: 340px; width: 351px; height: 53px; }
.form-label { position: absolute; left: 273px; font-size: 16px; line-height: 22px; letter-spacing: 1px; }
.lab1 { top: 143px; }
.lab2 { top: 242px; }
.form-input { position: absolute; left: 335px; width: 181px; height: 44px; background: #fff; border: 2px solid #aaa; border-radius: 4px; }
.in1 { top: 132px; }
.in2 { top: 232px; }
.form-btn { position: absolute; top: 351px; width: 160px; height: 30px; display: flex; align-items: center; justify-content: center; font-size: 16px; letter-spacing: 1px; border: 2px solid #aaa; border-radius: 4px; background: linear-gradient(#fff, #eee); }
.b1 { left: 232px; }
.b2 { left: 400px; }
.hd { position: absolute; width: 12px; height: 12px; background: #000; border: 2px solid #0000e8; }
.h1 { left: 254px; top: 114px; } .h2 { left: 388px; top: 114px; } .h3 { left: 522px; top: 114px; }
.h4 { left: 254px; top: 148px; } .h5 { left: 522px; top: 148px; }
.h6 { left: 254px; top: 182px; } .h7 { left: 388px; top: 182px; } .h8 { left: 522px; top: 182px; }

.actions { flex: 1; display: flex; flex-direction: column; min-height: 0; }
.act-bar { height: 50px; flex: none; background: #404244; display: flex; padding-left: 2px; align-items: center; }
.act { width: 60px; display: flex; justify-content: center; }
.act-a { width: 24px; height: 36px; } .act-b { width: 38px; height: 36px; } .act-c { width: 34px; height: 36px; } .act-d { width: 32px; height: 36px; } .act-e { width: 40px; height: 36px; }
.act-head { height: 27px; flex: none; display: flex; background: linear-gradient(#fff, #ececec); border-bottom: 2px solid #bbb; }
.col { width: 150px; padding-left: 2px; border-right: 2px solid #c4c4c4; line-height: 28px; height: 25px; }
.act-body { height: 51px; flex: none; background: #fff; }
.hscroll { height: 20px; flex: none; border-top: 1px solid #c0c0c0; background: linear-gradient(#fff, #eee); }
.sb-l { display: flex; align-items: center; justify-content: center; width: 18px; height: 19px; border-right: 1px solid #bbb; }
.tabs { flex: 1; min-height: 0; background: #f0f0f0; display: flex; align-items: flex-start; font-family: "Liberation Mono", monospace; font-size: 15px; }
.tab { height: 26px; margin-top: 3px; margin-left: 2px; padding: 5px 15px 0; display: flex; align-items: center; white-space: nowrap; background: #e2e2e2; border: 2px solid #c0c0c0; border-top: 0; border-radius: 0 0 5px 5px; }
.tab.on { height: 33px; width: 153px; margin-top: 0; margin-left: 0; background: linear-gradient(#f8f8f8, #fdfdfd); padding: 6px 0 0 16px; border-top: 2px solid #ccc; }

.right { flex: 1; min-width: 0; border-left: 2px solid #333; background: #fff; display: flex; flex-direction: column; }
.tree-zone { height: 394px; flex: none; display: flex; }
.tree { flex: 1; min-width: 0; }
.tree-head { height: 28px; display: grid; grid-template-columns: 149px 1fr; background: linear-gradient(#fff, #ececec); border-bottom: 2px solid #bbb; line-height: 28px; }
.th1 { border-right: 2px solid #c4c4c4; padding-left: 2px; }
.th2 { padding-left: 4px; }
.trow { height: 36px; display: grid; grid-template-columns: 149px 1fr; line-height: 24px; }
.trow.sel { background: #0078d7; color: #fff; }
.trow.alt { background: #e8e6e3; }
.c1, .c2 { display: flex; align-items: center; min-width: 0; overflow: hidden; padding-bottom: 2px; }
.c1 { padding-left: 6px; }
.c1.kid { padding-left: 40px; }
.c2 { padding-left: 7px; gap: 12px; }
.t0 { margin-right: 12px; }
.ti-break { width: 30px; height: 32px; margin-right: 14px; }
.kid .ti-hl { width: 30px; height: 34px; margin: 0 12px 0 18px; }
.ti-w { width: 32px; height: 26px; flex: none; }
.dots { line-height: 24px; }
.sel .dots { background: #1a86dc; align-self: stretch; padding: 6px 14px 0 6px; margin: 0 -14px 0 -6px; }
.vscroll { width: 21px; flex: none; display: flex; flex-direction: column; background: #f4f4f4; border-left: 1px solid #ddd; }
.sb-u, .sb-d { height: 22px; flex: none; display: flex; align-items: center; justify-content: center; background: #fbfbfb; }
.sb-fill { flex: 1; background: #f4f4f4; }
.sb-thumb { height: 335px; flex: none; background: #e4e4e4; border-top: 1px solid #bbb; border-bottom: 1px solid #bbb; }

.prop-zone { flex: 1; min-height: 0; display: flex; flex-direction: column; border-top: 4px solid #333; }
.filter-row { height: 46px; flex: none; display: flex; background: #404244; }
.filter { flex: 1; margin: 0 0 2px 2px; background: #fff; color: #999; font-family: "Liberation Mono", monospace; font-size: 15px; padding: 3px 4px 0; line-height: 41px; }
.filter-tool { width: 21px; display: flex; flex-direction: column; align-items: center; color: #aaa; font-size: 12px; line-height: 22px; }
.class-row { height: 26px; flex: none; display: flex; background: #efefef; border-bottom: 2px solid #ccc; }
.class-name { flex: 1; font-family: "Liberation Mono", monospace; font-size: 15px; padding: 2px 0 0 6px; line-height: 24px; white-space: nowrap; overflow: hidden; }
.class-end { width: 21px; background: #fbfbfb; border: 1px solid #ccc; }
.prop-main { flex: 1; min-height: 0; display: flex; }
.props { flex: 1; min-width: 0; display: flex; flex-direction: column; }
.prop-head { height: 29px; flex: none; display: grid; grid-template-columns: 297px 1fr; background: linear-gradient(#fff, #ececec); border-bottom: 2px solid #bbb; line-height: 30px; padding-left: 2px; }
.prow { height: 32px; flex: none; display: grid; grid-template-columns: 299px 1fr; background: #ffffdc; border-bottom: 3px solid #c8c8c8; line-height: 28px; }
.prow:nth-of-type(odd) { background: #ffffbf; }
.p1 { padding-left: 36px; border-right: 3px solid #c8c8c8; white-space: nowrap; overflow: hidden; display: flex; align-items: center; }
.p1.ex { padding-left: 10px; }
.p1.ex .tri-r { margin-right: 16px; }
.p2 { padding-left: 7px; white-space: nowrap; display: flex; align-items: center; }
.prop-rest { flex: 1; min-height: 0; background: #a0a0a0; }

/* pane bar */
.panebar { height: 52px; flex: none; display: flex; align-items: center; color: #e0e0e0; font-family: "Liberation Mono", "Noto Sans CJK SC", monospace; font-size: 15px; }
.pane-toggle { width: 22px; height: 22px; margin-left: 16px; flex: none; }
.locator { width: 400px; height: 42px; margin-left: 26px; background: #fff; color: #777; display: flex; align-items: center; font-family: "Noto Sans", sans-serif; font-size: 19px; letter-spacing: -.1px; padding-left: 12px; gap: 15px; }
.loc-ico { width: 30px; height: 24px; flex: none; }
.pane-sep { width: 2px; height: 36px; background: #5e6062; margin: 0 20px 0 6px; }
.pane { white-space: nowrap; margin-right: 34px; display: inline-flex; align-items: center; padding-top: 3px; }
.pane.p-first { margin-right: 36px; }
.pane b { font-weight: normal; margin-right: 18px; }
.cjk { font-size: 17.5px; line-height: 20px; margin-top: -2px; }
.pane-right { margin-left: auto; display: flex; align-items: center; padding-right: 14px; }
.pane-right .updown { margin: 0 85px 0 0; }
.pane-right .tri-u { margin-right: 16px; }
.pane-right .pane.p-sum { margin-right: 39px; }
.pane-right .pane.p-test b { margin-right: 14px; }
.pane-right .pane.p-test { margin-right: 35px; }
.pane-toggle.last { transform: scaleX(-1); }

/* taskbar */
.taskbar { height: 47px; flex: none; display: flex; background: #e0d4d8; overflow: hidden; }
.tb-start { width: 50px; flex: none; padding-top: 18px; }
.win-logo { width: 24px; height: 24px; display: block; }
.tb-search { width: 428px; flex: none; margin-top: 2px; background: #fff; display: flex; align-items: center; padding: 12px 0 0 16px; gap: 18px; font-size: 24px; color: #222; }
.s-ico { width: 24px; height: 24px; flex: none; margin-top: -4px; }
.tb-view { width: 76px; flex: none; display: flex; justify-content: center; padding-top: 16px; }
.view-ico { width: 26px; height: 26px; }
.tb-div { width: 4px; height: 36px; flex: none; margin: 11px 16px 0 7px; border-left: 1px solid #222; border-right: 1px solid #222; }
.tb-app { width: 76px; flex: none; display: flex; justify-content: center; padding-top: 11px; }
.tb-app.hot { width: 73px; background: #ffb27a; }
.tb-app.wide { width: 77px; }
.tb-app.qt { width: 68px; background: #efe8ea; }
.app-a { width: 34px; height: 34px; } .app-b { width: 38px; height: 38px; } .app-c { width: 36px; height: 40px; } .app-d { width: 36px; height: 36px; } .app-e { width: 38px; height: 40px; } .app-f { width: 32px; height: 36px; }
.tray { display: flex; align-items: flex-start; margin-left: 438px; flex: none; }
.battery { width: 47px; height: 29px; margin-top: 16px; background: #fff; border: 1px solid #aaa; border-radius: 2px; padding: 2px 6px 2px 0; display: flex; }
.bat-fill { flex: 1; background: #1a9a4f; color: #fff; font-size: 20px; line-height: 22px; text-align: right; padding-right: 8px; overflow: hidden; white-space: nowrap; direction: rtl; }
.tr-caret { width: 18px; height: 10px; margin: 27px 10px 0 10px; flex: none; }
.tr-wifi { width: 22px; height: 20px; margin: 23px 7px 0 7px; flex: none; }
.tr-sync { width: 26px; height: 24px; margin: 21px 4px 0 4px; flex: none; }
.tr-speak { width: 22px; height: 20px; margin: 23px 8px 0 8px; flex: none; }
.tr-ime { width: 30px; font-size: 24px; line-height: 32px; margin-top: 15px; text-align: center; flex: none; }
.clock { width: 132px; display: flex; flex-direction: column; align-items: center; font-size: 19.5px; line-height: 26px; padding-top: 3px; flex: none; white-space: nowrap; }
.notify { position: relative; width: 24px; margin: 18px 0 0 14px; flex: none; height: 29px; }
.tr-notify { width: 24px; height: 18px; display: block; }
.notify-num { position: absolute; left: 6px; top: 16px; width: 20px; height: 20px; border: 1px solid #999; border-radius: 50%; text-align: center; color: #333; font-size: 16px; line-height: 20px; }

/* overlay menus */
.menu { position: absolute; background: #fff; border: 1px solid #999; box-shadow: 2px 2px 3px rgba(0,0,0,.45); z-index: 5; line-height: 24px; }
.ctx { left: 1464px; top: 194px; width: 411px; }
.sub { left: 1027px; top: 718px; width: 437px; height: 360px; }
.mi { height: 38px; display: flex; align-items: center; white-space: nowrap; padding-bottom: 2px; }
.mi.tall { height: 40px; }
.ctx .mi-ico { width: 32px; height: 32px; margin: 0 10px 0 11px; flex: none; display: flex; }
.sub .mi-ico { width: 32px; height: 32px; margin: 0 8px 0 11px; flex: none; display: flex; }
.mi-svg { width: 32px; height: 32px; }
.mi-key { margin-left: auto; width: 84px; letter-spacing: .6px; }
.sub .mi-key { width: 86px; }
.mi-arrow { margin-left: auto; margin-right: 7px; }
.mi.off { color: #a8a8a8; }
.mi.off svg { opacity: .7; }
.msep { height: 4px; margin: 0 9px 0 8px; border-top: 1px solid #c8c8c8; }
.mi.hot { background: #0078d7; color: #fff; box-shadow: inset 0 0 0 2px #38a4f8; }
.ctx .mi.hot { height: 37px; margin-right: -1px; }

.mark { position: absolute; border: 2px solid #ed1c24; z-index: 6; pointer-events: none; }
.mark-tool { left: 1074px; top: 70px; width: 44px; height: 64px; }
.mark-rename { left: 1353px; top: 172px; width: 369px; height: 57px; }
.mark-break { left: 1029px; top: 992px; width: 404px; height: 59px; }
.watermark { position: absolute; left: 1727px; top: 1032px; z-index: 7; color: #b8b8b8; text-shadow: 0 0 1px #777; font-family: "Liberation Sans", sans-serif; font-size: 16px; line-height: 24px; white-space: nowrap; }
```
